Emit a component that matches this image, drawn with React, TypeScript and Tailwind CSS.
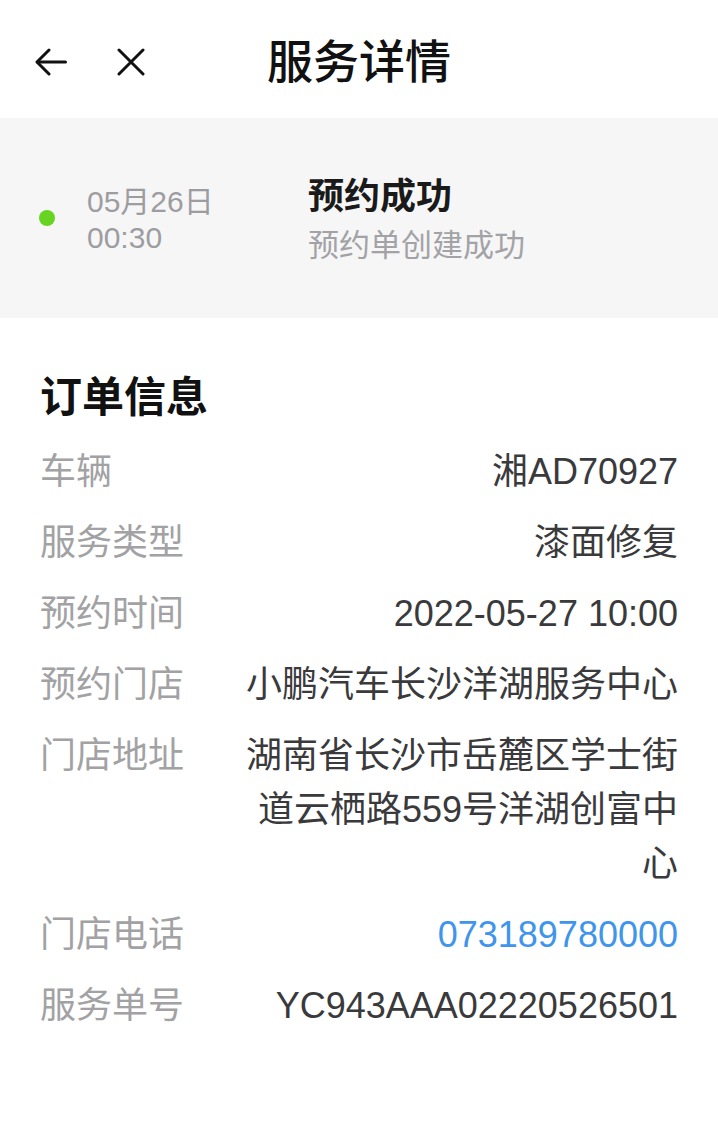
const font = { fontFamily: '"Liberation Sans", "Noto Sans CJK SC", sans-serif' };

interface Row {
  label: string;
  value: string;
  link?: boolean;
}

const rows: Row[] = [
  { label: '车辆', value: '湘AD70927' },
  { label: '服务类型', value: '漆面修复' },
  { label: '预约时间', value: '2022-05-27 10:00' },
  { label: '预约门店', value: '小鹏汽车长沙洋湖服务中心' },
  { label: '门店地址', value: '湖南省长沙市岳麓区学士街道云栖路559号洋湖创富中心' },
  { label: '门店电话', value: '073189780000', link: true },
  { label: '服务单号', value: 'YC943AAA02220526501' },
];

export default function App() {
  return (
    <div className="w-[718px] min-h-[1130px] bg-white" style={font}>
      {/* top bar */}
      <div className="h-[118px] grid grid-cols-[1fr_auto_1fr] items-center">
        <div className="flex items-center pl-[35px] gap-[50px] text-[#111] mt-[6px]">
          <svg width="32" height="28" viewBox="0 0 32 28" fill="none" stroke="currentColor" strokeWidth="3" strokeLinecap="round" strokeLinejoin="round">
            <path d="M30.5 14H2.5" />
            <path d="M14 2L2 14l12 12" />
          </svg>
          <svg width="28" height="28" viewBox="0 0 28 28" fill="none" stroke="currentColor" strokeWidth="3" strokeLinecap="round">
            <path d="M2 2l24 24M26 2L2 26" />
          </svg>
        </div>
        <h1 className="text-[46px] leading-none font-medium text-[#111] mt-[6px]">服务详情</h1>
        <div />
      </div>

      {/* status */}
      <div className="h-[200px] bg-[#f6f6f6] flex items-center">
        <div className="pl-[39px] pr-[32px]">
          <div className="size-4 rounded-full bg-[#66d420]" />
        </div>
        <div className="w-[221px] mt-[4px] text-[30px] leading-[36px] text-[#9d9da1]">
          <div>05月26日</div>
          <div>00:30</div>
        </div>
        <div className="mt-[10px]">
          <div className="text-[36px] leading-[46px] font-bold text-[#1a1a1a]">预约成功</div>
          <div className="text-[31px] leading-[52px] text-[#a3a3a7]">预约单创建成功</div>
        </div>
      </div>

      {/* order info */}
      <div className="px-[40px] pt-[52px]">
        <h2 className="text-[42px] leading-[56px] font-bold text-[#111] mb-[19px]">订单信息</h2>
        <div className="flex flex-col gap-[17px]">
          {rows.map((r) => (
            <div key={r.label} className="flex text-[36px] leading-[54px]">
              <div className="w-[198px] shrink-0 text-[#a2a2a4]">{r.label}</div>
              <div className={`flex-1 text-right ${r.link ? 'text-[#3f95ec]' : 'text-[#3a3a3c]'}`}>{r.value}</div>
            </div>
          ))}
        </div>
      </div>
    </div>
  );
}
